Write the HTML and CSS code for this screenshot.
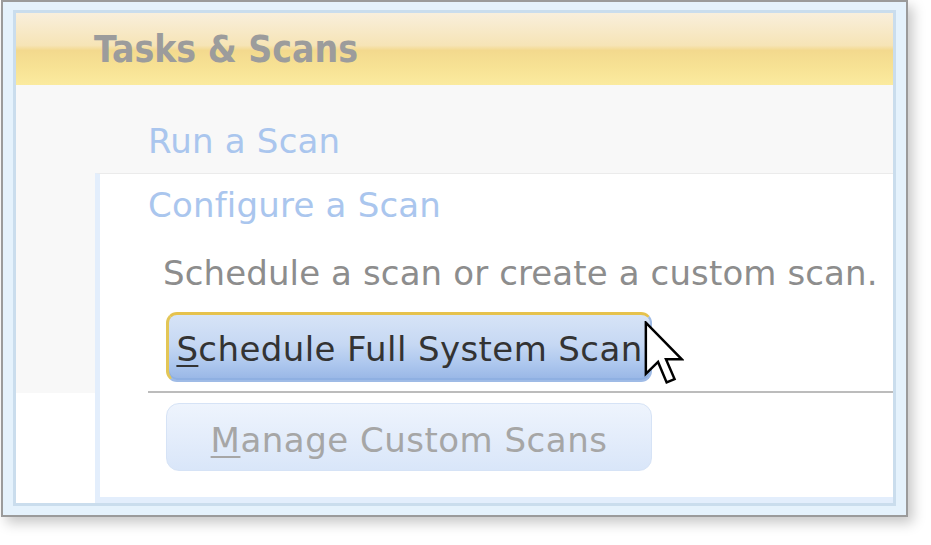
FILE: index.html
```html
<!DOCTYPE html>
<html>
<head>
<meta charset="utf-8">
<link rel="stylesheet" href="styles.css">
</head>
<body>
<div class="window">
  <div class="frame">
    <div class="header"><span class="title">Tasks &amp; Scans</span></div>
    <div class="body">
      <div class="link run">Run a Scan</div>
      <div class="row">
        <div class="gutter"></div>
        <div class="panel">
          <div class="link configure">Configure a Scan</div>
          <div class="desc">Schedule a scan or create a custom scan.</div>
          <div class="btn-wrap">
            <div class="btn primary"><u>S</u>chedule Full System Scan</div>
            <svg class="cursor" viewBox="0 0 12 20" width="40" height="66" aria-hidden="true">
              <path d="M0.5 0.5 L0.5 16 L4.2 12.4 L6.8 18.6 L9.2 17.6 L6.6 11.6 L11.4 11.6 Z" fill="#fff" stroke="#000" stroke-width="0.75" stroke-linejoin="miter"/>
            </svg>
          </div>
          <div class="sep"></div>
          <div class="btn disabled"><u>M</u>anage Custom Scans</div>
        </div>
      </div>
    </div>
  </div>
</div>
</body>
</html>
```

FILE: styles.css
```css
html, body {
  margin: 0;
  padding: 0;
  background: #ffffff;
  overflow: hidden;
}
body {
  width: 931px;
  height: 545px;
  font-family: "DejaVu Sans", "Liberation Sans", sans-serif;
}
.window {
  margin-left: 1px;
  width: 883px;
  border: 2px solid #9b9b9b;
  background: #e5f2fc;
  padding: 8px 10px 9px 10px;
  box-shadow: 5px 6px 12px rgba(0, 0, 0, 0.22);
}
.frame {
  border: 3px solid #cadded;
  background: #ffffff;
  display: flex;
  flex-direction: column;
}
.header {
  height: 72px;
  box-sizing: border-box;
  padding-left: 78px;
  background: linear-gradient(#f9efdc 0%, #f6e4b6 45%, #f3d98e 52%, #f7e294 75%, #fbeb9f 100%);
  display: flex;
  align-items: flex-start;
}
.title {
  font-family: "DejaVu Sans Condensed", "Liberation Sans", sans-serif;
  font-weight: bold;
  font-size: 37px;
  line-height: 40px;
  margin-top: 17px;
  color: #9c9c9c;
}
.body {
  background: linear-gradient(#f8f8f8 0, #f8f8f8 308px, #ffffff 308px);
  padding-top: 36px;
  display: flex;
  flex-direction: column;
}
.link {
  font-size: 34px;
  line-height: 40px;
  color: #aac6ee;
  letter-spacing: 0.2px;
}
.run {
  padding-left: 132px;
  margin-bottom: 12px;
}
.row {
  display: flex;
}
.gutter {
  width: 79px;
  flex: none;
}
.panel {
  flex: 1;
  background: #ffffff;
  border-left: 5px solid #e3eefc;
  border-top: 1px solid #ebebeb;
  border-bottom: 6px solid #e3eefc;
  padding: 11px 0 26px 0;
  display: flex;
  flex-direction: column;
}
.configure {
  padding-left: 48px;
}
.desc {
  font-size: 34px;
  line-height: 40px;
  color: #8d8d8d;
  padding-left: 63px;
  margin-top: 28px;
  white-space: nowrap;
  letter-spacing: 0.12px;
}
.btn-wrap {
  position: relative;
  margin-top: 19px;
  margin-left: 66px;
  width: 486px;
}
.btn {
  box-sizing: border-box;
  width: 486px;
  font-size: 34px;
  line-height: 40px;
  text-align: center;
  white-space: nowrap;
}
.btn u {
  text-underline-offset: 4px;
  text-decoration-thickness: 2px;
}
.primary {
  height: 70px;
  padding-top: 14px;
  border-radius: 11px;
  color: #333333;
  letter-spacing: 0.4px;
  border: 2px solid #9fbbe6;
  border-top: 3px solid #e6c24c;
  border-left: 3px solid #e3c656;
  background: linear-gradient(#d7e4f7 0%, #c6d8f3 45%, #adc7ee 75%, #98b6e6 100%);
  box-shadow: inset 0 -2px 0 #8fb0e2;
}
.cursor {
  position: absolute;
  left: 478px;
  top: 9px;
}
.sep {
  height: 2px;
  background: #bcbcbc;
  margin: 9px 0 10px 48px;
}
.disabled {
  margin-left: 66px;
  height: 68px;
  padding-top: 16px;
  border-radius: 13px;
  color: #a6a6a6;
  letter-spacing: 0.5px;
  border: 1px solid #d6e3f6;
  background: linear-gradient(#eef4fd 0%, #e4edfb 50%, #d9e6f9 100%);
}
```
